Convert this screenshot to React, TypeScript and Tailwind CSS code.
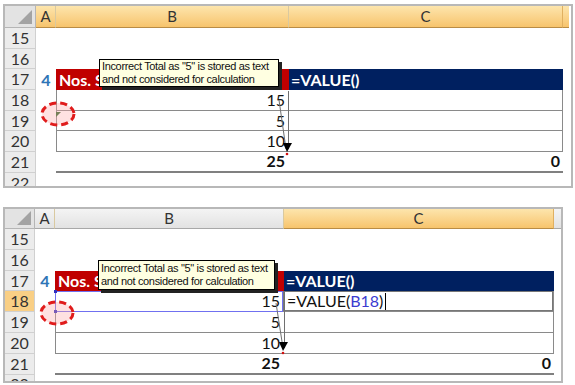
import React from "react";

const FONT = { fontFamily: "Lato, 'Liberation Sans', sans-serif" };

interface SheetProps {
  second?: boolean;
}

function Sheet({ second = false }: SheetProps) {
  const rowH = second ? "h-[20.8px]" : "h-[20.7px]";
  const hdrW = second ? "w-[30px]" : "w-[31px]";
  const bW = second ? "w-[229px]" : "w-[233px]";
  const cW = second ? "w-[270px]" : "w-[274px]";
  const extraW = second ? "w-[7px]" : "w-[6px]";
  const orange = "bg-linear-to-b from-[#fde5ac] to-[#f7c46c] border-b border-b-[#b98c45]";
  const gray = "bg-linear-to-b from-[#f4f4f4] to-[#e2e2e2] border-b border-b-[#a8a8a8]";

  const rowHeader = (n: number) => {
    const hi = second && n === 18;
    return (
      <div
        className={`${hdrW} ${rowH} shrink-0 flex items-center justify-center border-b border-r border-[#d0d0d0] text-[16px] text-[#333] ${
          hi ? "bg-[#f9cf85]" : "bg-[#ececec]"
        }`}
      >
        {n}
      </div>
    );
  };

  return (
    <div
      className={`relative overflow-hidden border-2 border-[#b8b8b8] bg-white ${
        second ? "w-[560px] h-[176px] mt-[19px]" : "w-[570px] h-[184px]"
      }`}
      style={FONT}
    >
      {/* column header */}
      <div className={`flex ${second ? "h-[20px]" : "h-[22px]"}`}>
        <div className={`${hdrW} shrink-0 relative bg-[#e3e3e3] border-r border-b border-[#b5b5b5]`}>
          <div className="absolute right-[3px] bottom-[3px] w-0 h-0 border-l-[14px] border-l-transparent border-b-[14px] border-b-[#a3a3a3]" />
        </div>
        <div className={`w-[20px] shrink-0 flex items-center justify-center text-[15px] text-[#333] border-r border-r-[#d9c9a0] ${second ? gray : orange}`}>A</div>
        <div className={`${bW} shrink-0 flex items-center justify-center text-[15px] text-[#333] border-r border-r-[#d9c9a0] ${second ? gray : orange}`}>B</div>
        <div className={`${cW} shrink-0 flex items-center justify-center text-[15px] text-[#333] border-r border-r-[#e0b060] ${orange}`}>C</div>
        <div className={`${extraW} shrink-0 ${second ? gray : orange}`} />
      </div>

      {/* rows 15, 16 */}
      {[15, 16].map((n) => (
        <div key={n} className={`flex ${rowH}`}>
          {rowHeader(n)}
        </div>
      ))}

      {/* row 17 */}
      <div className={`flex ${rowH}`}>
        {rowHeader(17)}
        <div className="w-[20px] shrink-0 flex items-center justify-center text-[16px] font-bold text-[#2e75b6]">4</div>
        <div className={`${bW} shrink-0 bg-[#c00000] text-white font-bold text-[16px] flex items-center px-[3px]`}>Nos. Sold</div>
        <div className={`${cW} shrink-0 bg-[#002060] text-white font-bold text-[16px] flex items-center px-[2px]`}>=VALUE()</div>
      </div>

      {/* rows 18-20 */}
      {[
        [18, "15"],
        [19, "5"],
        [20, "10"],
      ].map(([n, v]) => (
        <div key={n} className={`flex ${rowH}`}>
          {rowHeader(n as number)}
          <div className="w-[20px] shrink-0" />
          <div className={`${bW} shrink-0 border-l border-b border-[#8a8a8a] flex items-center justify-end pr-[4px] text-[16px] text-[#111]`}>{v}</div>
          <div className={`${cW} shrink-0 border-r border-b border-[#8a8a8a]`}>
            {second && n === 18 && (
              <div className="h-full -ml-[1px] border border-[#777] bg-white flex items-center px-[3px] text-[16px] text-[#111]">
                =VALUE(<span className="text-[#3b3bd0]">B18</span>)
                <span className="inline-block w-[1px] h-[17px] bg-black ml-[2px]" />
              </div>
            )}
          </div>
        </div>
      ))}

      {/* row 21 */}
      <div className={`flex ${rowH}`}>
        {rowHeader(21)}
        <div className="w-[20px] shrink-0" />
        <div className={`${bW} shrink-0 border-b-2 border-[#808080] flex items-center justify-end pr-[4px] text-[16px] font-bold text-[#111]`}>25</div>
        <div className={`${cW} shrink-0 border-b-2 border-[#808080] flex items-center justify-end pr-[3px] text-[16px] font-bold text-[#111]`}>0</div>
      </div>

      {/* row 22 */}
      <div className={`flex ${rowH}`}>{rowHeader(22)}</div>

      {/* overlays */}
      <svg className="absolute inset-0 pointer-events-none" width="100%" height="100%">
        {second ? (
          <>
            <rect x="50.5" y="82.5" width="227" height="20" fill="none" stroke="#7070f0" strokeWidth="1" />
            <rect x="49" y="81" width="3" height="3" fill="#3030c0" />
            <rect x="49" y="101" width="3" height="3" fill="#3030c0" />
            <line x1="271" y1="94" x2="278" y2="139" stroke="#707070" strokeWidth="1" />
            <line x1="279.5" y1="82" x2="279.5" y2="139" stroke="#707070" strokeWidth="1" />
            <polygon points="274,133 283,133 278,142" fill="#000" />
            <circle cx="278" cy="144" r="1.3" fill="#d01010" />
            <ellipse cx="52" cy="104" rx="16" ry="11" fill="rgba(255,170,170,0.35)" stroke="#e01c1c" strokeWidth="3" strokeDasharray="7 4" />
          </>
        ) : (
          <>
            <polygon points="51,106 56,106 51,111" fill="#2f6b2f" />
            <line x1="274" y1="94" x2="281" y2="143" stroke="#707070" strokeWidth="1" />
            <line x1="283.5" y1="85" x2="283.5" y2="143" stroke="#707070" strokeWidth="1" />
            <polygon points="278,137 287,137 282,146" fill="#000" />
            <circle cx="282" cy="148" r="1.3" fill="#d01010" />
            <ellipse cx="53" cy="108" rx="16" ry="11" fill="rgba(255,170,170,0.35)" stroke="#e01c1c" strokeWidth="3" strokeDasharray="7 4" />
          </>
        )}
      </svg>

      <div
        className={`absolute bg-[#ffffe1] border border-black shadow-[3px_3px_0_#222] px-[2px] text-[11px] leading-[13px] text-[#111] whitespace-nowrap ${
          second ? "left-[93px] top-[51px] w-[177px] h-[30px] pt-[1px]" : "left-[94px] top-[53px] w-[180px] h-[28px]"
        }`}
        style={{ fontFamily: "'Liberation Sans', Arial, sans-serif", letterSpacing: "-0.35px" }}
      >
        <div>Incorrect Total as "5" is stored as text</div>
        <div>and not considered for calculation</div>
      </div>
    </div>
  );
}

export default function App() {
  return (
    <div className="w-[575px] h-[385px] bg-white pt-[4px] pl-[3px] overflow-hidden">
      <Sheet />
      <Sheet second />
    </div>
  );
}
